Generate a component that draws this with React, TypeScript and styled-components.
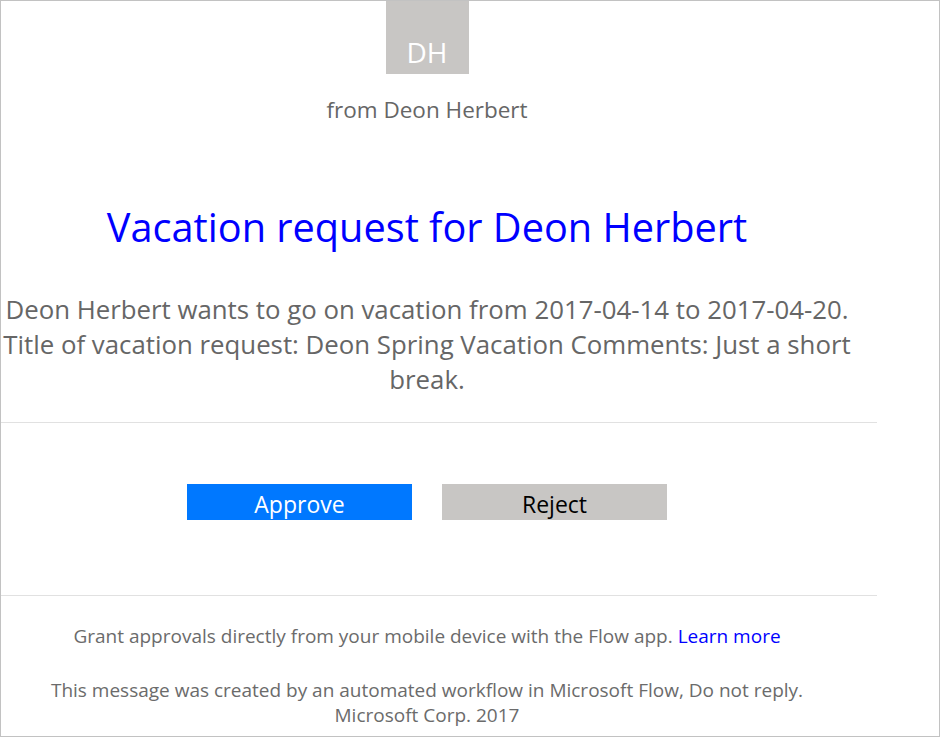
import React from "react";
import styled, { createGlobalStyle } from "styled-components";

const GlobalStyle = createGlobalStyle`
  html, body { margin: 0; padding: 0; background: #ffffff; }
  body { font-family: "Open Sans", "Noto Sans", sans-serif; }
`;

const Frame = styled.div`
  width: 940px;
  height: 737px;
  box-sizing: border-box;
  border: 1px solid #c2c2c2;
  overflow: hidden;
`;

const Content = styled.div`
  width: 876px;
  display: flex;
  flex-direction: column;
`;

const Section = styled.div<{ $pt?: number; $pb?: number }>`
  padding: ${(p) => p.$pt ?? 0}px 24px ${(p) => p.$pb ?? 0}px 0;
  display: flex;
  flex-direction: column;
  align-items: center;
  text-align: center;
`;

const Avatar = styled.div`
  width: 83px;
  height: 73px;
  background: #c8c6c4;
  color: #ffffff;
  font-size: 28px;
  line-height: 38px;
  display: flex;
  align-items: flex-end;
  justify-content: center;
  padding-bottom: 3px;
  box-sizing: border-box;
`;

const From = styled.div`
  margin-top: 21px;
  font-size: 22.5px;
  line-height: 30px;
  color: #666666;
`;

const Title = styled.h1`
  margin: 77px 0 0;
  font-size: 39.7px;
  font-weight: 400;
  color: #0000ff;
  line-height: 50px;
`;

const Body = styled.p`
  margin: 39.5px 0 0;
  font-size: 25.8px;
  line-height: 35px;
  color: #666666;
  white-space: nowrap;
`;

const Divider = styled.hr`
  width: 876px;
  margin: 0;
  border: none;
  border-top: 1px solid #e1e1e1;
`;

const Buttons = styled.div`
  display: flex;
  gap: 30px;
`;

const Button = styled.div<{ $primary?: boolean }>`
  width: 225px;
  height: 36px;
  box-sizing: border-box;
  padding-top: 3px;
  display: flex;
  align-items: center;
  justify-content: center;
  font-size: 23px;
  background: ${(p) => (p.$primary ? "#0078ff" : "#c8c6c4")};
  color: ${(p) => (p.$primary ? "#ffffff" : "#000000")};
`;

const Note = styled.div<{ $mt?: number }>`
  margin-top: ${(p) => p.$mt ?? 0}px;
  font-size: 19px;
  line-height: 25px;
  color: #6b6b6b;
  white-space: nowrap;
`;

const Link = styled.a`
  color: #0000ff;
  text-decoration: none;
`;

export default function App() {
  return (
    <>
      <GlobalStyle />
      <Frame>
        <Content>
          <Section $pb={25.5}>
            <Avatar>DH</Avatar>
            <From>from Deon Herbert</From>
            <Title>Vacation request for Deon Herbert</Title>
            <Body>
              Deon Herbert wants to go on vacation from 2017-04-14 to 2017-04-20.
              <br />
              Title of vacation request: Deon Spring Vacation Comments: Just a short
              <br />
              break.
            </Body>
          </Section>
          <Divider />
          <Section $pt={61} $pb={75}>
            <Buttons>
              <Button $primary>Approve</Button>
              <Button>Reject</Button>
            </Buttons>
          </Section>
          <Divider />
          <Section $pt={27.5}>
            <Note>
              Grant approvals directly from your mobile device with the Flow app.{" "}
              <Link href="#">Learn more</Link>
            </Note>
            <Note $mt={29}>
              This message was created by an automated workflow in Microsoft Flow, Do not reply.
              <br />
              Microsoft Corp. 2017
            </Note>
          </Section>
        </Content>
      </Frame>
    </>
  );
}
